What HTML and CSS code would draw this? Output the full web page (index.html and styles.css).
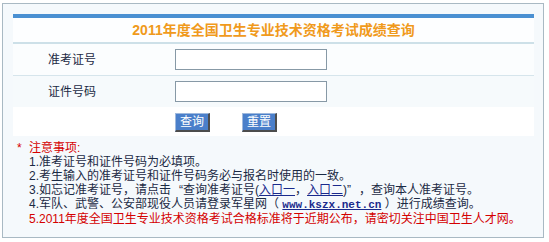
FILE: index.html
```html
<!DOCTYPE html>
<html lang="zh-CN">
<head>
<meta charset="UTF-8">
<title>2011年度全国卫生专业技术资格考试成绩查询</title>
<link rel="stylesheet" href="styles.css">
</head>
<body>

<div class="box">
    <form class="panel">
        <div class="bar"></div>
        <div class="title">2011年度全国卫生专业技术资格考试成绩查询</div>
        <div class="row">
            <label class="lbl" for="zkz">准考证号</label>
            <input type="text" id="zkz" class="ipt">
        </div>
        <div class="row row2">
            <label class="lbl" for="zjh">证件号码</label>
            <input type="text" id="zjh" class="ipt">
        </div>
        <div class="btns">
            <button type="button" class="btn">查询</button>
            <button type="reset" class="btn">重置</button>
        </div>
    </form>

    <div class="notes">
        <div class="head"><span class="star">*</span>注意事项:</div>
        <div class="line">1.准考证号和证件号码为必填项。</div>
        <div class="line">2.考生输入的准考证号和证件号码务必与报名时使用的一致。</div>
        <div class="line">3.如忘记准考证号，请点击<span class="q ql">“</span>查询准考证号(<a href="#">入口一</a>，<a href="#">入口二</a>)<span class="q">”</span>，查询本人准考证号。</div>
        <div class="line">4.军队、武警、公安部现役人员请登录军星网（ <a href="#" class="site">www.kszx.net.cn</a> ）进行成绩查询。</div>
        <div class="line red">5.2011年度全国卫生专业技术资格考试合格标准将于近期公布，请密切关注中国卫生人才网。</div>
    </div>
</div>

</body>
</html>
```

FILE: styles.css
```css
body {
    margin: 0;
    padding: 0;
    background: #ffffff;
    font-family: "Liberation Sans", "Noto Sans CJK SC", sans-serif;
    font-size: 12px;
    color: #1b2a44;
}

.box {
    margin: 3px 0 0 2px;
    width: 542px;
    height: 235px;
    box-sizing: border-box;
    border: 1px solid #a9b9c3;
    background-color: #f5f9fc;
    padding: 10px 8px 0 10px;
}

.panel {
    margin: 0;
    width: 521px;
}

.bar {
    height: 4px;
    background-color: #4a90d2;
}

.title {
    height: 24px;
    line-height: 24px;
    text-align: center;
    font-size: 14px;
    font-weight: bold;
    color: #f09a1c;
    background-color: #fdfeff;
    border-bottom: 2px solid #cde0e8;
}

.row {
    display: grid;
    grid-template-columns: 162px auto;
    align-items: center;
    height: 31px;
    background-color: #fbfdfe;
    border-bottom: 1px solid #d6e5ec;
}

.row2 {
    background-color: #f6fafc;
    border-bottom: none;
}

.lbl {
    padding-left: 35px;
    line-height: 14px;
}

.ipt {
    width: 152px;
    height: 21px;
    box-sizing: border-box;
    margin: 0;
    border: 1px solid #8799a6;
    background: #ffffff;
}

.btns {
    display: flex;
    gap: 32px;
    height: 29px;
    box-sizing: border-box;
    padding: 6px 0 0 162px;
    background-color: #ffffff;
}

.btn {
    width: 35px;
    height: 19px;
    padding: 0;
    margin: 0;
    box-sizing: border-box;
    font-family: "Liberation Sans", "Noto Sans CJK SC", sans-serif;
    font-size: 12px;
    line-height: 15px;
    color: #ffffff;
    background-color: #4a7fca;
    border: 1px solid;
    border-color: #9fb9dd #4d4d4d #4d4d4d #9fb9dd;
    border-right-width: 2px;
    border-bottom-width: 2px;
    cursor: pointer;
}

.notes {
    margin: 5px 0 0 4px;
    line-height: 14px;
}

.head {
    color: #d60000;
}

.star {
    display: inline-block;
    width: 12px;
}

.line {
    padding-left: 12px;
}

/* full-width quote marks */
.q {
    display: inline-block;
    width: 12px;
}

.ql {
    text-align: right;
}

.notes a {
    color: #1a2a8c;
    text-decoration: underline;
}

.site {
    font-family: "Liberation Mono", monospace;
    font-size: 11px;
    font-weight: bold;
}

.red {
    color: #d40000;
}
```
